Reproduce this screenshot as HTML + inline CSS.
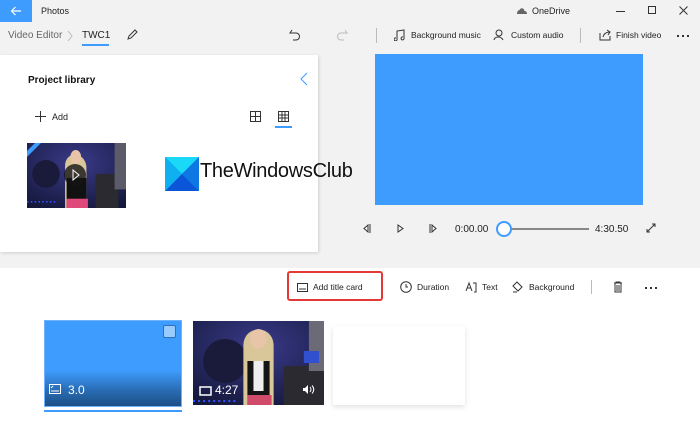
<!DOCTYPE html>
<html><head><meta charset="utf-8"><style>
*{margin:0;padding:0;box-sizing:border-box}
body{width:700px;height:443px;overflow:hidden;background:#fff;font-family:"Liberation Sans",sans-serif;position:relative;color:#222}
.a{position:absolute}
.top{left:0;top:0;width:700px;height:268px;background:#f2f2f2}
.t{position:absolute;font-size:9px;color:#222;white-space:nowrap}
svg{position:absolute}
.dots{position:absolute;width:2px;height:2px;background:#333;box-shadow:5px 0 #333,10px 0 #333}
</style></head><body>
<div class="a top"></div>
<div class="a" style="left:0;top:0;width:32px;height:22px;background:#3f9cff"></div>
<svg style="left:10px;top:5px" width="12" height="12" viewBox="0 0 12 12"><path d="M11 6H1.5M5.5 2L1.5 6l4 4" stroke="#fff" stroke-width="1.2" fill="none"/></svg>
<div class="t" style="left:41px;top:6px;font-size:9px">Photos</div>
<svg style="left:516px;top:6px" width="12" height="9"><path d="M1 8h10c0-2-1-3-2.5-3C8 2 5 1 3.5 4 2 4 1 6 1 8z" fill="#666"/></svg>
<div class="t" style="left:532px;top:6px">OneDrive</div>
<div class="a" style="left:616px;top:11px;width:9px;height:1px;background:#333"></div>
<div class="a" style="left:648px;top:6px;width:8px;height:8px;border:1px solid #333"></div>
<svg style="left:679px;top:6px" width="9" height="9"><path d="M0.5 0.5l8 8M8.5 0.5l-8 8" stroke="#333"/></svg>

<div class="t" style="left:8px;top:30px;font-size:10px;color:#666">Video Editor</div>
<svg style="left:67px;top:30px" width="6" height="12"><path d="M1 1l4 5-4 5" stroke="#bbb" fill="none"/></svg>
<div class="t" style="left:82px;top:30px;font-size:10px">TWC1</div>
<div class="a" style="left:82px;top:44px;width:27px;height:2px;background:#3f9cff"></div>
<svg style="left:126px;top:29px" width="12" height="12"><path d="M2 10l1-3 6-6 2 2-6 6z" stroke="#333" fill="none"/></svg>
<svg style="left:289px;top:29px" width="12" height="12"><path d="M3 1L1 4h6a3 3 0 0 1 0 7H4" stroke="#333" fill="none"/></svg>
<svg style="left:336px;top:29px" width="12" height="12"><path d="M9 1l2 3H5a3 3 0 0 0 0 7h3" stroke="#bbb" fill="none"/></svg>
<div class="a" style="left:376px;top:28px;width:1px;height:15px;background:#bbb"></div>
<svg style="left:394px;top:29px" width="11" height="12"><path d="M3 10V2l7-1v8M3 10a1.5 1.5 0 1 1-1-1M10 9a1.5 1.5 0 1 1-1-1" stroke="#333" fill="none"/></svg>
<div class="t" style="left:411px;top:30px;font-size:8.5px">Background music</div>
<svg style="left:493px;top:29px" width="12" height="12"><circle cx="6" cy="4" r="3" stroke="#333" fill="none"/><path d="M1 11c1-4 7-4 9 0" stroke="#333" fill="none"/></svg>
<div class="t" style="left:511px;top:30px;font-size:8.5px">Custom audio</div>
<div class="a" style="left:580px;top:28px;width:1px;height:15px;background:#bbb"></div>
<svg style="left:599px;top:29px" width="12" height="12"><path d="M1 4v7h10V7M4 8c1-4 4-5 7-5M8 1l3 2-2 3" stroke="#333" fill="none"/></svg>
<div class="t" style="left:616px;top:30px;font-size:8.5px">Finish video</div>
<div class="dots" style="left:677px;top:35px"></div>

<div class="a" style="left:0;top:55px;width:318px;height:197px;background:#fff;box-shadow:1px 1px 3px rgba(0,0,0,.15)"></div>
<div class="t" style="left:28px;top:75px;font-size:10px;font-weight:bold;color:#111">Project library</div>
<svg style="left:300px;top:72px" width="8" height="14"><path d="M7 1L1 7l6 6" stroke="#3f9cff" fill="none"/></svg>
<svg style="left:35px;top:111px" width="11" height="11"><path d="M5.5 0v11M0 5.5h11" stroke="#333"/></svg>
<div class="t" style="left:52px;top:112px;font-size:9px">Add</div>
<svg style="left:250px;top:111px" width="11" height="11"><rect x=".5" y=".5" width="10" height="10" fill="none" stroke="#333"/><path d="M5.5 0v11M0 5.5h11" stroke="#333"/></svg>
<svg style="left:278px;top:111px" width="11" height="11"><rect x=".5" y=".5" width="10" height="10" fill="none" stroke="#333"/><path d="M4 0v11M7 0v11M0 4h11M0 7h11" stroke="#333"/></svg>
<div class="a" style="left:275px;top:126px;width:17px;height:2px;background:#3f9cff"></div>

<svg style="left:27px;top:143px" width="99" height="65" viewBox="0 0 130 84" preserveAspectRatio="none">
<defs><radialGradient id="bg" cx=".5" cy=".3" r=".8"><stop offset="0" stop-color="#3a3a8a"/><stop offset="1" stop-color="#14183a"/></radialGradient></defs>
<rect width="130" height="84" fill="url(#bg)"/><circle cx="25" cy="40" r="18" fill="#1a1a3a"/>
<rect x="90" y="40" width="30" height="44" fill="#2a2a30"/><rect x="115" y="0" width="15" height="60" fill="#5b5b6a"/>
<path d="M50 84V30c0-20 25-20 28 0v54z" fill="#d9c79a"/><path d="M52 84V45h26v39z" fill="#111"/><rect x="52" y="72" width="28" height="12" fill="#e04a7a"/><ellipse cx="64" cy="18" rx="7" ry="9" fill="#e8c5a8"/>
<path d="M0 76h40" stroke="#3050ff" stroke-width="2" stroke-dasharray="2 3"/>
</svg>
<svg style="left:27px;top:143px" width="14" height="14"><path d="M0 14V8L8 0h6z" fill="#3f9cff"/></svg>
<div class="a" style="left:64px;top:164px;width:22px;height:22px;border-radius:50%;background:rgba(20,20,20,.8)"></div>
<svg style="left:72px;top:169px" width="8" height="12"><path d="M1 1l6 5-6 5z" stroke="#fff" fill="none"/></svg>

<svg style="left:165px;top:157px" width="34" height="34" viewBox="0 0 34 34"><rect width="34" height="34" fill="#1b8ee8"/><path d="M0 0L17 17 34 0z" fill="#1ad8f7"/><path d="M0 34L17 17 34 34z" fill="#0a55d8"/><path d="M0 0L17 17 0 34z" fill="#0fb0f0"/><path d="M34 0L17 17 34 34z" fill="#0d78e4"/></svg>
<div class="t" style="left:200px;top:160px;font-size:20px;color:#111;letter-spacing:-.3px">TheWindowsClub</div>

<div class="a" style="left:375px;top:54px;width:268px;height:151px;background:#3f9cff"></div>
<svg style="left:363px;top:224px" width="8" height="9"><path d="M5 1L1 4.5 5 8zM7 0v9" stroke="#333" fill="none"/></svg>
<svg style="left:397px;top:224px" width="8" height="9"><path d="M1 1l5 3.5L1 8z" stroke="#333" fill="none"/></svg>
<svg style="left:429px;top:224px" width="8" height="9"><path d="M3 1l4 3.5L3 8zM1 0v9" stroke="#333" fill="none"/></svg>
<div class="t" style="left:455px;top:224px;font-size:10px">0:00.00</div>
<div class="a" style="left:503px;top:228px;width:86px;height:2px;background:#888"></div>
<div class="a" style="left:496px;top:221px;width:16px;height:16px;border-radius:50%;background:#fff;border:2px solid #3f9cff"></div>
<div class="t" style="left:595px;top:224px;font-size:10px">4:30.50</div>
<svg style="left:646px;top:223px" width="10" height="10"><path d="M1 9l8-8M1 6v3h3M6 1h3v3" stroke="#333" fill="none"/></svg>

<div class="a" style="left:287px;top:271px;width:96px;height:30px;border:2px solid #e53935;border-radius:3px"></div>
<svg style="left:297px;top:283px" width="11" height="9"><rect x=".5" y=".5" width="10" height="8" fill="none" stroke="#333"/><path d="M2 6h7" stroke="#333"/></svg>
<div class="t" style="left:313px;top:282px;font-size:8.5px">Add title card</div>
<svg style="left:400px;top:281px" width="12" height="12"><circle cx="6" cy="6" r="5.3" stroke="#333" fill="none"/><path d="M6 3v3h2" stroke="#333" fill="none"/></svg>
<div class="t" style="left:417px;top:282px;font-size:8.5px">Duration</div>
<svg style="left:465px;top:281px" width="12" height="12"><path d="M1 10l3-8 3 8M2 7h4M8 2h3v9h-2" stroke="#333" fill="none"/></svg>
<div class="t" style="left:482px;top:282px;font-size:8.5px">Text</div>
<svg style="left:512px;top:281px" width="12" height="12"><path d="M5 1l5 5-4 4-5-5zM1 11h4" stroke="#333" fill="none"/></svg>
<div class="t" style="left:529px;top:282px;font-size:8.5px">Background</div>
<div class="a" style="left:591px;top:280px;width:1px;height:14px;background:#bbb"></div>
<svg style="left:613px;top:281px" width="10" height="12"><path d="M1 2h8M3 2V1h4v1M2 2v9h6V2" stroke="#333" fill="none"/><path d="M4 4v6M6 4v6" stroke="#333"/></svg>
<div class="dots" style="left:645px;top:287px"></div>

<div class="a" style="left:44px;top:320px;width:138px;height:87px;background:linear-gradient(#3f9cff 0%,#3f9cff 58%,#2a6fb8 80%,#1d4f86 100%);border:1px solid #6fb3ff"></div>
<div class="a" style="left:163px;top:325px;width:13px;height:13px;border-radius:2px;background:#9acbff;border:1px solid #2d6fb8"></div>
<svg style="left:49px;top:384px" width="12" height="10"><rect x=".5" y=".5" width="11" height="9" fill="none" stroke="#fff"/><path d="M2 7h8M2 4l2-2" stroke="#fff"/></svg>
<div class="t" style="left:68px;top:383px;font-size:12px;color:#fff">3.0</div>
<div class="a" style="left:44px;top:410px;width:138px;height:2px;background:#3f9cff"></div>

<svg style="left:193px;top:321px" width="131" height="84" viewBox="0 0 130 84" preserveAspectRatio="none">
<rect width="130" height="84" fill="url(#bg)"/><circle cx="32" cy="40" r="22" fill="#1a1a3a"/>
<rect x="90" y="45" width="40" height="39" fill="#2a2a30"/><rect x="115" y="0" width="15" height="50" fill="#6b6b78"/><rect x="110" y="30" width="15" height="12" fill="#3050d0"/>
<path d="M50 84V25c0-22 30-22 30 0v59z" fill="#d9c79a"/><path d="M54 84V40h22v44z" fill="#141414"/><rect x="60" y="40" width="10" height="30" fill="#eee"/><rect x="54" y="74" width="24" height="10" fill="#d04a6a"/><ellipse cx="65" cy="18" rx="8" ry="10" fill="#e8c5a8"/>
<path d="M0 80h45" stroke="#3050ff" stroke-width="2" stroke-dasharray="2 3"/>
</svg>
<svg style="left:199px;top:386px" width="13" height="10"><rect x="1" y="1" width="11" height="8" fill="none" stroke="#fff" stroke-width="1.5"/></svg>
<div class="t" style="left:215px;top:383px;font-size:12px;color:#fff">4:27</div>
<svg style="left:302px;top:384px" width="13" height="11"><path d="M1 4h2l3-3v9L3 7H1z" fill="#fff"/><path d="M8 3q2 2.5 0 5M10 1.5q3.5 4 0 8" stroke="#fff" fill="none"/></svg>

<div class="a" style="left:333px;top:326px;width:132px;height:79px;background:#fff;box-shadow:0 2px 5px rgba(0,0,0,.12)"></div>
</body></html>
